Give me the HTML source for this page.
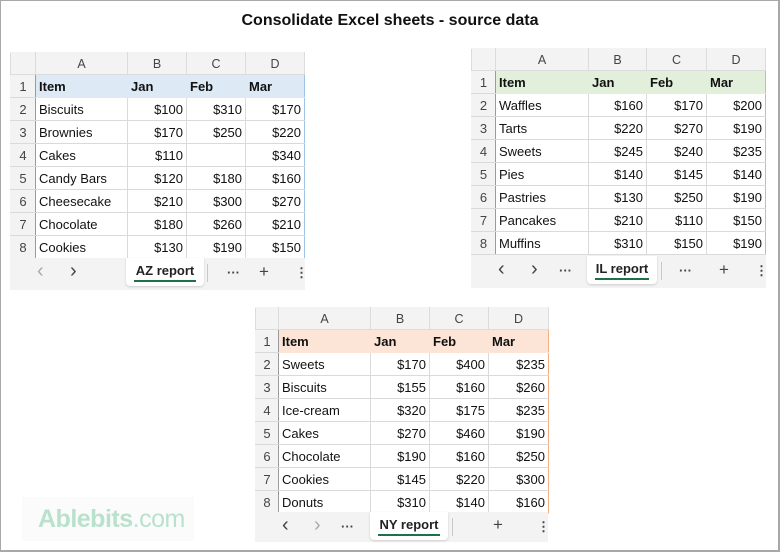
<!DOCTYPE html>
<html><head><meta charset="utf-8"><style>
*{margin:0;padding:0;box-sizing:border-box}
body{width:780px;height:552px;background:#fff;position:relative;overflow:hidden;font-family:"Liberation Sans",Arial,sans-serif}
.frame{position:absolute;left:0;top:0;width:780px;height:552px;border:1px solid #a8a8a8;border-right:2px solid #a8a8a8;border-bottom:2px solid #a8a8a8}
h1{position:absolute;left:0;width:780px;top:12px;text-align:center;font-size:16px;font-weight:bold;color:#111}
.sheet{position:absolute;background:#f3f3f3}
table{border-collapse:collapse;table-layout:fixed;font-size:13px;color:#111}
td{height:23px;border:1px solid #dadada;padding:0 3px;white-space:nowrap;overflow:hidden;background:#fff}
tr.hd td{height:22px;background:#f3f3f3;color:#444;text-align:center;border-color:#dcdcdc;border-top-color:#f3f3f3;font-size:12.5px}
td.rn{background:#f3f3f3;color:#444;text-align:center;padding:0;border-right:1px solid #9a9a9a;border-left-color:#f3f3f3}
tr.hd td.rn{border-right:1px solid #dcdcdc}
td.n{text-align:right}
tr.r1 td{font-weight:bold}
tr.r1.b td:not(.rn){border-left-color:#dde9f5;border-right-color:#dde9f5;border-bottom-color:#dde9f5}
tr.r1.g td:not(.rn){border-left-color:#e2efda;border-right-color:#e2efda;border-bottom-color:#e2efda}
tr.r1.o td:not(.rn){border-left-color:#fce4d6;border-right-color:#fce4d6;border-bottom-color:#fce4d6}
tr.r1 td.rn{font-weight:normal}
.tabs{position:absolute;left:0;right:0;bottom:0;height:32px;background:#f3f3f3;font-size:13px;color:#444}
.tabs span{position:absolute;top:7px}
.tabs span.ch{font-size:20px;top:2px}
.tab{position:absolute;top:0;height:28px;background:#fff;border-radius:0 0 4px 4px;box-shadow:0 1px 2px #ccc;font-weight:bold;color:#222;text-align:center;padding-top:5px}
.tab i{position:absolute;left:8px;right:8px;bottom:4px;height:2px;background:#1e7145}
.sep{position:absolute;top:6px;width:1px;height:18px;background:#c8c8c8}
.logo{position:absolute;left:22px;top:497px;width:172px;height:44px;background:#fbfbfb;font-size:25px;color:#b9e2cc;font-weight:bold;letter-spacing:-0.5px;padding:8px 0 0 16px}
.logo small{font-weight:normal;font-size:25px}
</style></head><body>
<div class="frame"></div>
<h1>Consolidate Excel sheets - source data</h1>

<!-- AZ -->
<div class="sheet" style="left:10px;top:52px;width:295px;height:238px">
<table style="width:294px"><colgroup><col style="width:25px"><col style="width:92px"><col style="width:59px"><col style="width:59px"><col style="width:59px"></colgroup>
<tr class="hd"><td class="rn"></td><td>A</td><td>B</td><td>C</td><td>D</td></tr>
<tr class="r1 b"><td class="rn">1</td><td style="background:#dde9f5">Item</td><td style="background:#dde9f5">Jan</td><td style="background:#dde9f5">Feb</td><td style="background:#dde9f5;border-right-color:#9dc3e6">Mar</td></tr>
<tr><td class="rn">2</td><td>Biscuits</td><td class="n">$100</td><td class="n">$310</td><td class="n" style="border-right-color:#9dc3e6">$170</td></tr>
<tr><td class="rn">3</td><td>Brownies</td><td class="n">$170</td><td class="n">$250</td><td class="n" style="border-right-color:#9dc3e6">$220</td></tr>
<tr><td class="rn">4</td><td>Cakes</td><td class="n">$110</td><td class="n"></td><td class="n" style="border-right-color:#9dc3e6">$340</td></tr>
<tr><td class="rn">5</td><td>Candy Bars</td><td class="n">$120</td><td class="n">$180</td><td class="n" style="border-right-color:#9dc3e6">$160</td></tr>
<tr><td class="rn">6</td><td>Cheesecake</td><td class="n">$210</td><td class="n">$300</td><td class="n" style="border-right-color:#9dc3e6">$270</td></tr>
<tr><td class="rn">7</td><td>Chocolate</td><td class="n">$180</td><td class="n">$260</td><td class="n" style="border-right-color:#9dc3e6">$210</td></tr>
<tr><td class="rn">8</td><td>Cookies</td><td class="n">$130</td><td class="n">$190</td><td class="n" style="border-right-color:#9dc3e6">$150</td></tr>
</table>
<div class="tabs">
<span class="ch" style="left:27px;color:#aaa">&#8249;</span><span class="ch" style="left:60px">&#8250;</span>
<div class="tab" style="left:116px;width:78px">AZ report<i></i></div>
<div class="sep" style="left:197px"></div>
<span style="left:217px;font-weight:bold">&middot;&middot;&middot;</span><span style="left:249px;font-size:17px;top:4px">+</span><span style="left:285px;font-weight:bold">&#8942;</span>
</div></div>

<!-- IL -->
<div class="sheet" style="left:471px;top:48px;width:295px;height:240px">
<table style="width:294px"><colgroup><col style="width:24px"><col style="width:93px"><col style="width:58px"><col style="width:60px"><col style="width:59px"></colgroup>
<tr class="hd"><td class="rn"></td><td>A</td><td>B</td><td>C</td><td>D</td></tr>
<tr class="r1 g"><td class="rn">1</td><td style="background:#e2efda">Item</td><td style="background:#e2efda">Jan</td><td style="background:#e2efda">Feb</td><td style="background:#e2efda;border-right-color:#a9d08e">Mar</td></tr>
<tr><td class="rn">2</td><td>Waffles</td><td class="n">$160</td><td class="n">$170</td><td class="n" style="border-right-color:#a9d08e">$200</td></tr>
<tr><td class="rn">3</td><td>Tarts</td><td class="n">$220</td><td class="n">$270</td><td class="n" style="border-right-color:#a9d08e">$190</td></tr>
<tr><td class="rn">4</td><td>Sweets</td><td class="n">$245</td><td class="n">$240</td><td class="n" style="border-right-color:#a9d08e">$235</td></tr>
<tr><td class="rn">5</td><td>Pies</td><td class="n">$140</td><td class="n">$145</td><td class="n" style="border-right-color:#a9d08e">$140</td></tr>
<tr><td class="rn">6</td><td>Pastries</td><td class="n">$130</td><td class="n">$250</td><td class="n" style="border-right-color:#a9d08e">$190</td></tr>
<tr><td class="rn">7</td><td>Pancakes</td><td class="n">$210</td><td class="n">$110</td><td class="n" style="border-right-color:#a9d08e">$150</td></tr>
<tr><td class="rn">8</td><td>Muffins</td><td class="n">$310</td><td class="n">$150</td><td class="n" style="border-right-color:#a9d08e">$190</td></tr>
</table>
<div class="tabs">
<span class="ch" style="left:27px">&#8249;</span><span class="ch" style="left:60px">&#8250;</span><span style="left:88px;font-weight:bold">&middot;&middot;&middot;</span>
<div class="tab" style="left:116px;width:70px">IL report<i></i></div>
<div class="sep" style="left:190px"></div>
<span style="left:208px;font-weight:bold">&middot;&middot;&middot;</span><span style="left:248px;font-size:17px;top:4px">+</span><span style="left:284px;font-weight:bold">&#8942;</span>
</div></div>

<!-- NY -->
<div class="sheet" style="left:255px;top:307px;width:293px;height:235px">
<table style="width:293px"><colgroup><col style="width:23px"><col style="width:92px"><col style="width:59px"><col style="width:59px"><col style="width:60px"></colgroup>
<tr class="hd"><td class="rn"></td><td>A</td><td>B</td><td>C</td><td>D</td></tr>
<tr class="r1 o"><td class="rn">1</td><td style="background:#fce4d6">Item</td><td style="background:#fce4d6">Jan</td><td style="background:#fce4d6">Feb</td><td style="background:#fce4d6;border-right-color:#f4b084">Mar</td></tr>
<tr><td class="rn">2</td><td>Sweets</td><td class="n">$170</td><td class="n">$400</td><td class="n" style="border-right-color:#f4b084">$235</td></tr>
<tr><td class="rn">3</td><td>Biscuits</td><td class="n">$155</td><td class="n">$160</td><td class="n" style="border-right-color:#f4b084">$260</td></tr>
<tr><td class="rn">4</td><td>Ice-cream</td><td class="n">$320</td><td class="n">$175</td><td class="n" style="border-right-color:#f4b084">$235</td></tr>
<tr><td class="rn">5</td><td>Cakes</td><td class="n">$270</td><td class="n">$460</td><td class="n" style="border-right-color:#f4b084">$190</td></tr>
<tr><td class="rn">6</td><td>Chocolate</td><td class="n">$190</td><td class="n">$160</td><td class="n" style="border-right-color:#f4b084">$250</td></tr>
<tr><td class="rn">7</td><td>Cookies</td><td class="n">$145</td><td class="n">$220</td><td class="n" style="border-right-color:#f4b084">$300</td></tr>
<tr><td class="rn">8</td><td>Donuts</td><td class="n">$310</td><td class="n">$140</td><td class="n" style="border-right-color:#f4b084">$160</td></tr>
</table>
<div class="tabs" style="height:30px">
<span class="ch" style="left:27px">&#8249;</span><span class="ch" style="left:59px;color:#aaa">&#8250;</span><span style="left:86px;font-weight:bold">&middot;&middot;&middot;</span>
<div class="tab" style="left:115px;width:78px">NY report<i></i></div>
<div class="sep" style="left:197px"></div>
<span style="left:238px;font-size:17px;top:3px">+</span><span style="left:282px;font-weight:bold">&#8942;</span>
</div></div>

<div class="logo">Ablebits<small>.com</small></div>
</body></html>
